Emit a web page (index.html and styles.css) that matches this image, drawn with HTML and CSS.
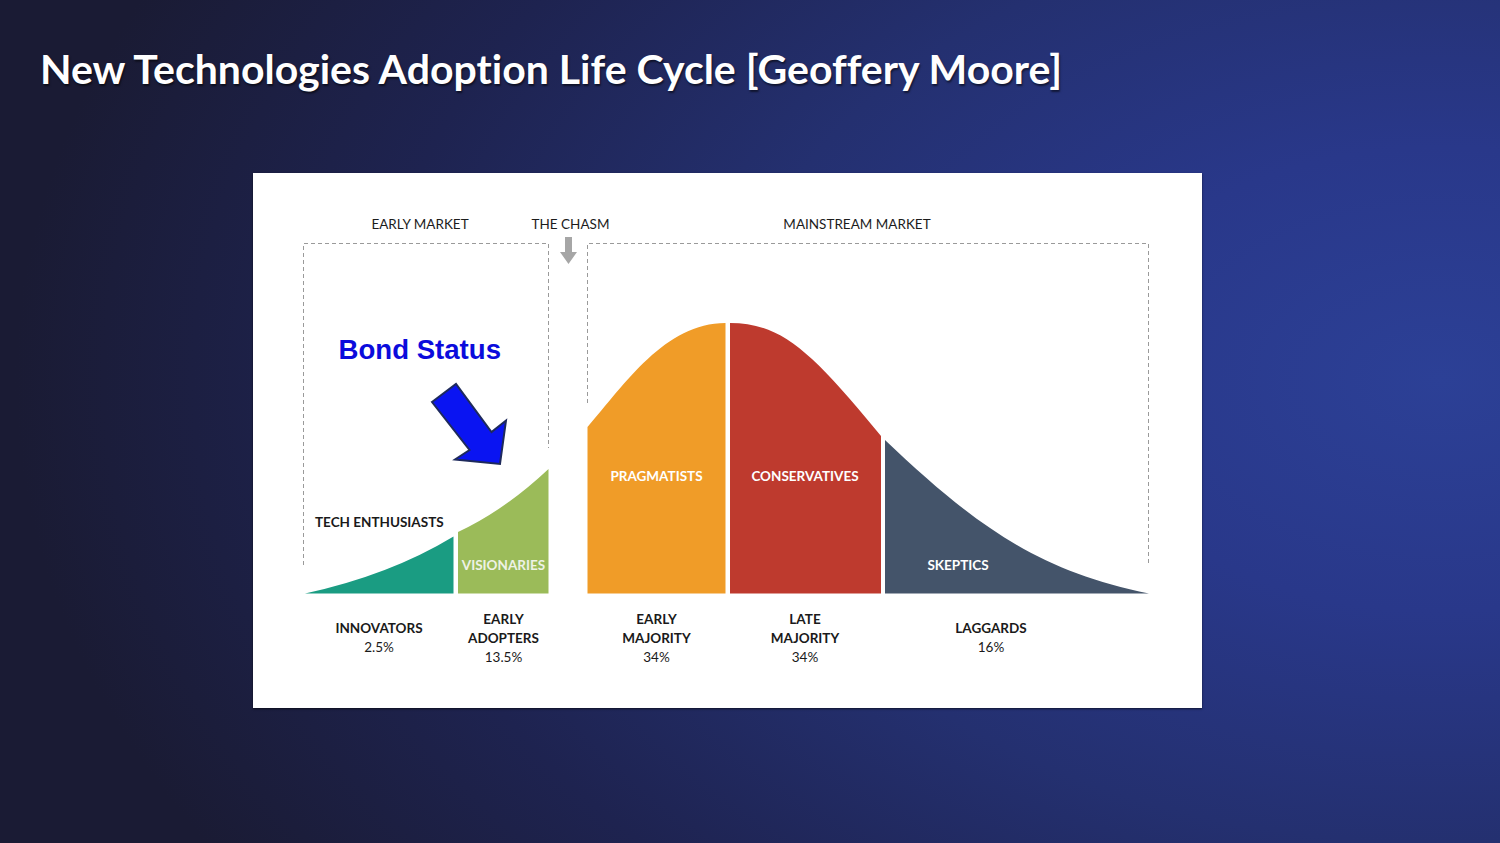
FILE: index.html
```html
<!DOCTYPE html>
<html lang="en">
<head>
<meta charset="utf-8">
<title>New Technologies Adoption Life Cycle</title>
<link rel="stylesheet" href="styles.css">
</head>
<body>
<div class="slide">
  <h1 class="title">New Technologies Adoption Life Cycle [Geoffery Moore]</h1>
  <div class="card">
    <svg class="chart" width="949" height="535" viewBox="253 173 949 535" xmlns="http://www.w3.org/2000/svg">
      <!-- market boxes -->
      <path class="dash" d="M303.5,565 V243.5 H548.5 V448"/>
      <path class="dash" d="M587.5,403 V243.5 H1148.5 V565"/>
      <!-- top labels -->
      <text class="top" x="420" y="229">EARLY MARKET</text>
      <text class="top" x="570.5" y="229">THE CHASM</text>
      <text class="top" x="857" y="229">MAINSTREAM MARKET</text>
      <!-- chasm arrow -->
      <path class="chasm" d="M565,237 H572 V252 H577 L568.5,264 L560,252 H565 Z"/>
      <!-- curve segments -->
      <path class="teal" d="M305,593.5 Q390,575 453.5,536.5 V593.5 Z"/>
      <path class="green" d="M458,532 Q505,510 548.5,469 V593.5 H458 Z"/>
      <path class="orange" d="M587.5,593.5 V427 C625,384 665,323 725.5,323 V593.5 Z"/>
      <path class="red" d="M730,323 C780,323 810,350 876,430 L881,436 V593.5 H730 Z"/>
      <path class="slate" d="M885,440 C975,525.5 1038,571 1149,593.5 H885 Z"/>
      <!-- in-shape labels -->
      <text class="inlabel" x="656.5" y="481">PRAGMATISTS</text>
      <text class="inlabel" x="805" y="481">CONSERVATIVES</text>
      <text class="inlabel soft" x="503.5" y="570">VISIONARIES</text>
      <text class="inlabel" x="958" y="570">SKEPTICS</text>
      <text class="dark" x="315" y="527">TECH ENTHUSIASTS</text>
      <!-- bottom labels -->
      <text class="bl" x="379" y="633">INNOVATORS</text>
      <text class="pct" x="379" y="652">2.5%</text>
      <text class="bl" x="503.5" y="624">EARLY</text>
      <text class="bl" x="503.5" y="643">ADOPTERS</text>
      <text class="pct" x="503.5" y="662">13.5%</text>
      <text class="bl" x="656.5" y="624">EARLY</text>
      <text class="bl" x="656.5" y="643">MAJORITY</text>
      <text class="pct" x="656.5" y="662">34%</text>
      <text class="bl" x="805" y="624">LATE</text>
      <text class="bl" x="805" y="643">MAJORITY</text>
      <text class="pct" x="805" y="662">34%</text>
      <text class="bl" x="991" y="633">LAGGARDS</text>
      <text class="pct" x="991" y="652">16%</text>
      <!-- annotation -->
      <text class="bond" x="338.5" y="359">Bond Status</text>
      <path class="blue-arrow" d="M432,402 L456,384 L491.5,432 L506,420.5 L500,464 L455,459.5 L469.5,450 Z"/>
    </svg>
  </div>
</div>
</body>
</html>
```

FILE: styles.css
```css
html, body {
  margin: 0;
  padding: 0;
}

body {
  width: 1500px;
  height: 843px;
  overflow: hidden;
  background: radial-gradient(ellipse 95% 110% at 96% 45%, #2c4096 0%, #29388a 25%, #243070 50%, #1e2350 75%, #1a1b34 100%);
  font-family: Lato, "Open Sans", sans-serif;
}

.slide {
  padding: 44px 0 0 40px;
}

.title {
  margin: 0;
  font-family: Lato, "Open Sans", sans-serif;
  font-weight: 700;
  font-size: 41px;
  line-height: 50px;
  height: 50px;
  color: #ffffff;
  letter-spacing: 0;
  font-variant-ligatures: none;
  text-shadow: 1px 2px 2px rgba(0, 0, 0, 0.55);
  white-space: nowrap;
}

.card {
  margin: 79px 0 0 213px;
  width: 949px;
  height: 535px;
  background: #ffffff;
  box-shadow: 0 1px 2px rgba(0, 0, 0, 0.6);
}

.chart {
  display: block;
}

.dash {
  fill: none;
  stroke: #9a9a9a;
  stroke-width: 1;
  stroke-dasharray: 4 3;
}

.chasm {
  fill: #a6a6a6;
}

.teal { fill: #1a9c82; }
.green { fill: #9bbb59; }
.orange { fill: #f09c28; }
.red { fill: #be3a2e; }
.slate { fill: #44546a; }

.top {
  font-family: Lato, "Open Sans", sans-serif;
  font-size: 13.5px;
  fill: #1c1c1c;
  text-anchor: middle;
}

.inlabel {
  font-family: Lato, "Open Sans", sans-serif;
  font-weight: 700;
  font-size: 13.5px;
  fill: #ffffff;
  text-anchor: middle;
}

.inlabel.soft {
  fill: #eef2e6;
}

.dark {
  font-family: Lato, "Open Sans", sans-serif;
  font-weight: 700;
  font-size: 13.5px;
  fill: #1a1a1a;
}

.bl {
  font-family: Lato, "Open Sans", sans-serif;
  font-weight: 700;
  font-size: 13.5px;
  fill: #1a1a1a;
  text-anchor: middle;
}

.pct {
  font-family: Lato, "Open Sans", sans-serif;
  font-size: 13.5px;
  fill: #1a1a1a;
  text-anchor: middle;
}

.bond {
  font-family: "Liberation Sans", Arial, sans-serif;
  font-weight: 700;
  font-size: 27.6px;
  fill: #0b0bdc;
}

.blue-arrow {
  fill: #0a14f2;
  stroke: #1e2a5c;
  stroke-width: 2;
  stroke-linejoin: miter;
}
```
